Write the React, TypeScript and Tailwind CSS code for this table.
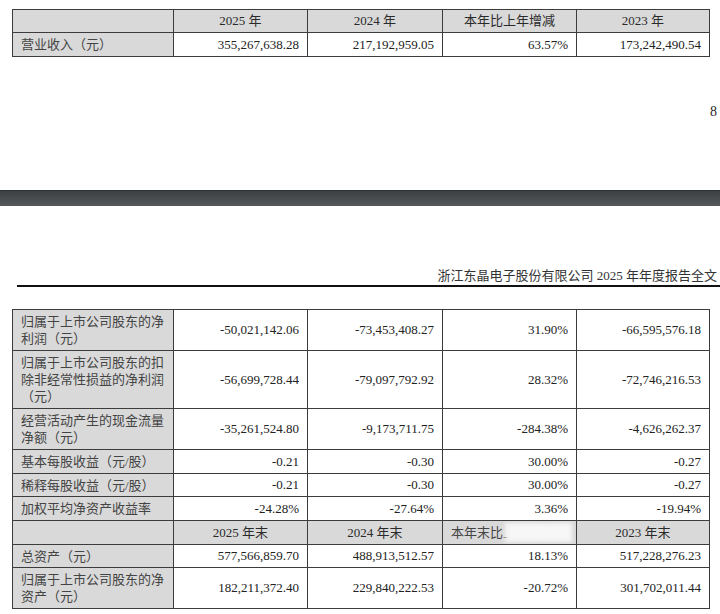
import React from "react"

type Row = {
  label: string[]
  values: string[]
  h: string
  header?: boolean
}

const topRows: Row[] = [
  { label: [""], values: ["2025 年", "2024 年", "本年比上年增减", "2023 年"], h: "h-[23px]", header: true },
  { label: ["营业收入（元）"], values: ["355,267,638.28", "217,192,959.05", "63.57%", "173,242,490.54"], h: "h-[24px]" },
]

const mainRows: Row[] = [
  {
    label: ["归属于上市公司股东的净", "利润（元）"],
    values: ["-50,021,142.06", "-73,453,408.27", "31.90%", "-66,595,576.18"],
    h: "h-[41px]",
  },
  {
    label: ["归属于上市公司股东的扣", "除非经常性损益的净利润", "（元）"],
    values: ["-56,699,728.44", "-79,097,792.92", "28.32%", "-72,746,216.53"],
    h: "h-[58px]",
  },
  {
    label: ["经营活动产生的现金流量", "净额（元）"],
    values: ["-35,261,524.80", "-9,173,711.75", "-284.38%", "-4,626,262.37"],
    h: "h-[41px]",
  },
  { label: ["基本每股收益（元/股）"], values: ["-0.21", "-0.30", "30.00%", "-0.27"], h: "h-[24px]" },
  { label: ["稀释每股收益（元/股）"], values: ["-0.21", "-0.30", "30.00%", "-0.27"], h: "h-[23px]" },
  { label: ["加权平均净资产收益率"], values: ["-24.28%", "-27.64%", "3.36%", "-19.94%"], h: "h-[24px]" },
  { label: [""], values: ["2025 年末", "2024 年末", "BLUR", "2023 年末"], h: "h-[24px]", header: true },
  { label: ["总资产（元）"], values: ["577,566,859.70", "488,913,512.57", "18.13%", "517,228,276.23"], h: "h-[23px]" },
  {
    label: ["归属于上市公司股东的净", "资产（元）"],
    values: ["182,211,372.40", "229,840,222.53", "-20.72%", "301,702,011.44"],
    h: "h-[41px]",
  },
]

function DataTable({ rows }: { rows: Row[] }) {
  return (
    <table className="ml-[12px] w-[697px] table-fixed border-collapse border border-[#3c3c3c] text-[13px]">
      <colgroup>
        <col className="w-[161px]" />
        <col className="w-[134px]" />
        <col className="w-[135px]" />
        <col className="w-[134px]" />
        <col className="w-[133px]" />
      </colgroup>
      <tbody>
        {rows.map((row, i) => (
          <tr key={i} className={row.h}>
            <td className="border border-[#3c3c3c] bg-[#d9d9d9] pl-[8px] align-middle leading-[17px] text-[#444]">
              {row.label.map((line, j) => (
                <div key={j}>{line}</div>
              ))}
            </td>
            {row.values.map((v, j) =>
              row.header ? (
                v === "BLUR" ? (
                  <td key={j} className="relative overflow-hidden border border-[#3c3c3c] bg-[#d9d9d9] pl-[8px] text-left text-[#444]">
                    本年末比上年末增减
                    {/* smudge over the scan */}
                    <div className="absolute inset-y-[2px] left-[62px] right-[4px] bg-[#f7f7f7] blur-[2px]" />
                  </td>
                ) : (
                  <td key={j} className="border border-[#3c3c3c] bg-[#d9d9d9] text-center text-[#2a2a2a]">
                    {v}
                  </td>
                )
              ) : (
                <td key={j} className="border border-[#3c3c3c] bg-white pr-[8px] text-right text-[#222]">
                  {v}
                </td>
              )
            )}
          </tr>
        ))}
      </tbody>
    </table>
  )
}

export default function App() {
  return (
    <div className="h-[614px] w-[720px] overflow-hidden bg-white pt-[9px] font-['Liberation_Serif','Noto_Sans_CJK_SC',serif] text-[#2a2a2a]">
      {/* previous page */}
      <DataTable rows={topRows} />
      <div className="mt-[46px] pr-[3px] text-right text-[14px] leading-[17px]">8</div>

      {/* page break */}
      <div className="mt-[70px] h-[16px] border-t border-[#2f3234] bg-gradient-to-b from-[#3d4043] to-[#56595c]" />

      {/* next page header */}
      <div className="mt-[62px] pr-[3px] text-right text-[13px] leading-[16px] text-[#333]">
        浙江东晶电子股份有限公司 2025 年年度报告全文
      </div>
      <div className="ml-[17px] mt-[1px] h-[2px] bg-[#111]" />

      <div className="mt-[22px]">
        <DataTable rows={mainRows} />
      </div>
    </div>
  )
}
